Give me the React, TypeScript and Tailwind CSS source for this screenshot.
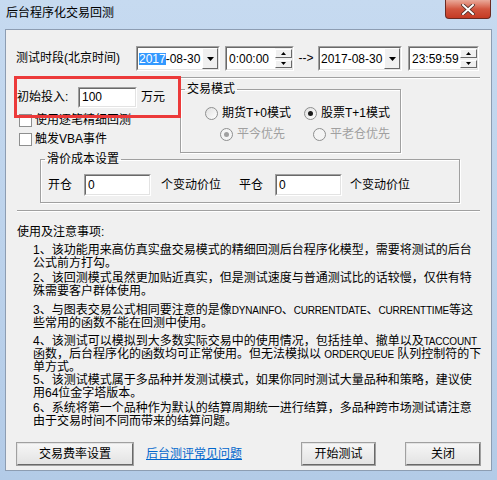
import type { ReactNode } from 'react'

// classic sunken edit box
function Sunken({ className = '', children }: { className?: string; children?: ReactNode }) {
  return (
    <div className={`border border-t-[#a0a0a0] border-l-[#a0a0a0] border-b-white border-r-white ${className}`}>
      <div className="flex h-full items-stretch bg-white border border-t-[#696969] border-l-[#696969] border-b-[#e3e3e3] border-r-[#e3e3e3]">
        {children}
      </div>
    </div>
  )
}

function Raised({ className = '', children }: { className?: string; children?: ReactNode }) {
  return (
    <div className={`flex items-center justify-center bg-[#f0f0f0] border border-t-white border-l-white border-b-[#696969] border-r-[#696969] ${className}`}>
      {children}
    </div>
  )
}

function DatePick({ children }: { children: ReactNode }) {
  return (
    <Sunken className="w-[84px] h-[25px]">
      <div className="flex-1 flex items-center pl-[1px] text-[12px] leading-none">{children}</div>
      <Raised className="w-[16px]">
        <svg width="7" height="4" viewBox="0 0 7 4"><path d="M0 0h7L3.5 4z" fill="#000" /></svg>
      </Raised>
    </Sunken>
  )
}

function TimePick({ w, children }: { w: string; children: ReactNode }) {
  return (
    <Sunken className={`${w} h-[25px]`}>
      <div className="flex-1 flex items-center pl-[2px] text-[12px] leading-none">{children}</div>
      <div className="flex flex-col w-[17px] bg-[#f0f0f0] py-[1px] gap-[2px]">
        <Raised className="flex-1">
          <svg width="5" height="3" viewBox="0 0 5 3"><path d="M0 3h5L2.5 0z" fill="#000" /></svg>
        </Raised>
        <Raised className="flex-1">
          <svg width="5" height="3" viewBox="0 0 5 3"><path d="M0 0h5L2.5 3z" fill="#000" /></svg>
        </Raised>
      </div>
    </Sunken>
  )
}

function Radio({ checked, disabled, children }: { checked?: boolean; disabled?: boolean; children: ReactNode }) {
  return (
    <div className={`flex items-center ${disabled ? 'text-[#a0a0a0]' : 'text-black'}`}>
      <span className={`flex w-[13px] h-[13px] items-center justify-center rounded-full border border-[#8e8f8f] ${disabled ? 'bg-[#f4f4f4]' : 'bg-gradient-to-br from-[#e0e0e0] to-white'}`}>
        {checked && <span className={`w-[5px] h-[5px] rounded-full ${disabled ? 'bg-[#a0a0a0]' : 'bg-[#1a1a1a]'}`} />}
      </span>
      <span className="ml-[4px]">{children}</span>
    </div>
  )
}

function Check({ children }: { children: ReactNode }) {
  return (
    <div className="flex items-center h-[13px]">
      <span className="w-[13px] h-[13px] bg-white border border-[#8e8f8f]" />
      <span className="ml-[3px]">{children}</span>
    </div>
  )
}

function Button({ className = '', children }: { className?: string; children: ReactNode }) {
  return (
    <div className={`h-[22px] flex items-center justify-center bg-gradient-to-b from-[#f6f6f6] to-[#e3e3e3] border border-t-[#e3e3e3] border-l-[#e3e3e3] border-b-[#696969] border-r-[#696969] shadow-[0_0_0_1px_#a0a0a0] text-[12px] ${className}`}>
      {children}
    </div>
  )
}

// latin runs in the notes are set smaller than the CJK text
function L({ children }: { children: ReactNode }) {
  return <span className="text-[10px] tracking-[-0.2px]">{children}</span>
}

export default function App() {
  return (
    <div className="w-[497px] h-[480px] overflow-hidden flex flex-col bg-gradient-to-b from-[#c6daf0] to-[#b3cbe7] text-black font-['Liberation_Sans','Noto_Sans_CJK_SC',sans-serif]">
      {/* title bar */}
      <div className="relative h-[29px] shrink-0">
        <div className="pl-[6px] pt-[5px] text-[12px] leading-[16px] text-black">后台程序化交易回测</div>
        <div className="absolute left-[445px] top-0 w-[46px] h-[19px] rounded-b-[4px] border border-t-0 border-[#6b2a22] bg-gradient-to-b from-[#e9a99a] via-[#d2553f] to-[#c43a24] flex items-center justify-center">
          <svg width="14" height="11" viewBox="0 0 14 11">
            <path d="M2 1 L12 10 M12 1 L2 10" stroke="#4a2a25" strokeWidth="3.6" strokeLinecap="square" />
            <path d="M2 1 L12 10 M12 1 L2 10" stroke="#fff" strokeWidth="2" strokeLinecap="square" />
          </svg>
        </div>
      </div>

      {/* client */}
      <div className="relative ml-[5px] w-[487px] h-[442px] border border-[#8d9db2] bg-[#f0f0f0] text-[12px] leading-[13px]">
        {/* period row */}
        <div className="h-[47px] pl-[10px] pt-[16px] flex items-start">
          <div className="w-[120px] h-[25px] flex items-center">测试时段(北京时间)</div>
          <DatePick>
            <span className="bg-[#3399ff] text-white">2017</span>-08-30
          </DatePick>
          <div className="ml-[5px]">
            <TimePick w="w-[69px]">0:00:00</TimePick>
          </div>
          <div className="w-[24px] h-[25px] flex items-center justify-center">--&gt;</div>
          <DatePick>2017-08-30</DatePick>
          <div className="ml-[6px]">
            <TimePick w="w-[71px]">23:59:59</TimePick>
          </div>
        </div>
        <div className="ml-[11px] w-[463px] border-t border-[#a0a0a0] shadow-[0_1px_0_#fff]" />

        {/* options */}
        <div className="flex">
          <div className="w-[174px]">
            <div className="mt-[9px] h-[21px] flex items-center pl-[11px]">
              <span className="w-[61px]">初始投入:</span>
              <Sunken className="w-[59px] h-[21px]">
                <div className="flex items-center pl-[2px]">100</div>
              </Sunken>
              <span className="ml-[4px]">万元</span>
            </div>
            <div className="mt-[6px] pl-[13px]">
              <Check>使用逐笔精细回测</Check>
            </div>
            <div className="mt-[6px] pl-[13px]">
              <Check>触发VBA事件</Check>
            </div>
          </div>
          <fieldset className="mt-[3px] w-[221px] h-[72px] border border-[#a0a0a0] shadow-[inset_1px_1px_0_#fff,1px_1px_0_#fff]">
            <legend className="ml-[4px] px-[2px] leading-[16px]">交易模式</legend>
            <div className="mt-[10px] pl-[24px] flex">
              <div className="w-[99px]"><Radio>期货T+0模式</Radio></div>
              <Radio checked>股票T+1模式</Radio>
            </div>
            <div className="mt-[8px] pl-[39px] flex">
              <div className="w-[93px]"><Radio checked disabled>平今优先</Radio></div>
              <Radio disabled>平老仓优先</Radio>
            </div>
          </fieldset>
        </div>

        {/* slippage */}
        <fieldset className="ml-[34px] w-[420px] h-[50px] border border-[#a0a0a0] shadow-[inset_1px_1px_0_#fff,1px_1px_0_#fff]">
          <legend className="ml-[4px] px-[2px] leading-[12px]">滑价成本设置</legend>
          <div className="mt-[9px] h-[22px] pl-[7px] flex items-center">
            <span className="w-[36px]">开仓</span>
            <Sunken className="w-[67px] h-[22px]">
              <div className="flex items-center pl-[2px]">0</div>
            </Sunken>
            <span className="ml-[10px]">个变动价位</span>
            <span className="ml-[18px]">平仓</span>
            <Sunken className="ml-[12px] w-[67px] h-[22px]">
              <div className="flex items-center pl-[2px]">0</div>
            </Sunken>
            <span className="ml-[8px]">个变动价位</span>
          </div>
        </fieldset>

        <div className="mt-[7px] ml-[11px] w-[463px] border-t border-[#a0a0a0] shadow-[0_1px_0_#fff]" />

        {/* notes */}
        <div className="mt-[15px] pl-[11px]">使用及注意事项:</div>
        <div className="pl-[27px] whitespace-nowrap">
          <p className="mt-[5px]">1、该功能用来高仿真实盘交易模式的精细回测后台程序化模型，需要将测试的后台<br />公式前方打勾。</p>
          <p className="mt-[2px]">2、该回测模式虽然更加贴近真实，但是测试速度与普通测试比的话较慢，仅供有特<br />殊需要客户群体使用。</p>
          <p className="mt-[6px]">3、与图表交易公式相同要注意的是像<L>DYNAINFO</L>、<L>CURRENTDATE</L>、<L>CURRENTTIME</L>等这<br />些常用的函数不能在回测中使用。</p>
          <p className="mt-[5px]">4、该测试可以模拟到大多数实际交易中的使用情况，包括挂单、撤单以及<L>TACCOUNT</L><br />函数，后台程序化的函数均可正常使用。但无法模拟以 <L>ORDERQUEUE</L> 队列控制符的下<br />单方式。</p>
          <p>5、该测试模式属于多品种并发测试模式，如果你同时测试大量品种和策略，建议使<br />用64位金字塔版本。</p>
          <p className="mt-[2px]">6、系统将第一个品种作为默认的结算周期统一进行结算，多品种跨市场测试请注意<br />由于交易时间不同而带来的结算问题。</p>
        </div>

        {/* buttons */}
        <div className="mt-[15px] flex items-center">
          <Button className="ml-[11px] w-[116px]">交易费率设置</Button>
          <span className="ml-[13px] text-[#0066cc] underline">后台测评常见问题</span>
          <Button className="ml-[60px] w-[73px]">开始测试</Button>
          <Button className="ml-[31px] w-[74px]">关闭</Button>
        </div>

        {/* highlight annotation */}
        <div className="absolute left-[8px] top-[46px] w-[167px] h-[42px] border-[3px] border-[#ec3a3a] pointer-events-none" />
      </div>
    </div>
  )
}
